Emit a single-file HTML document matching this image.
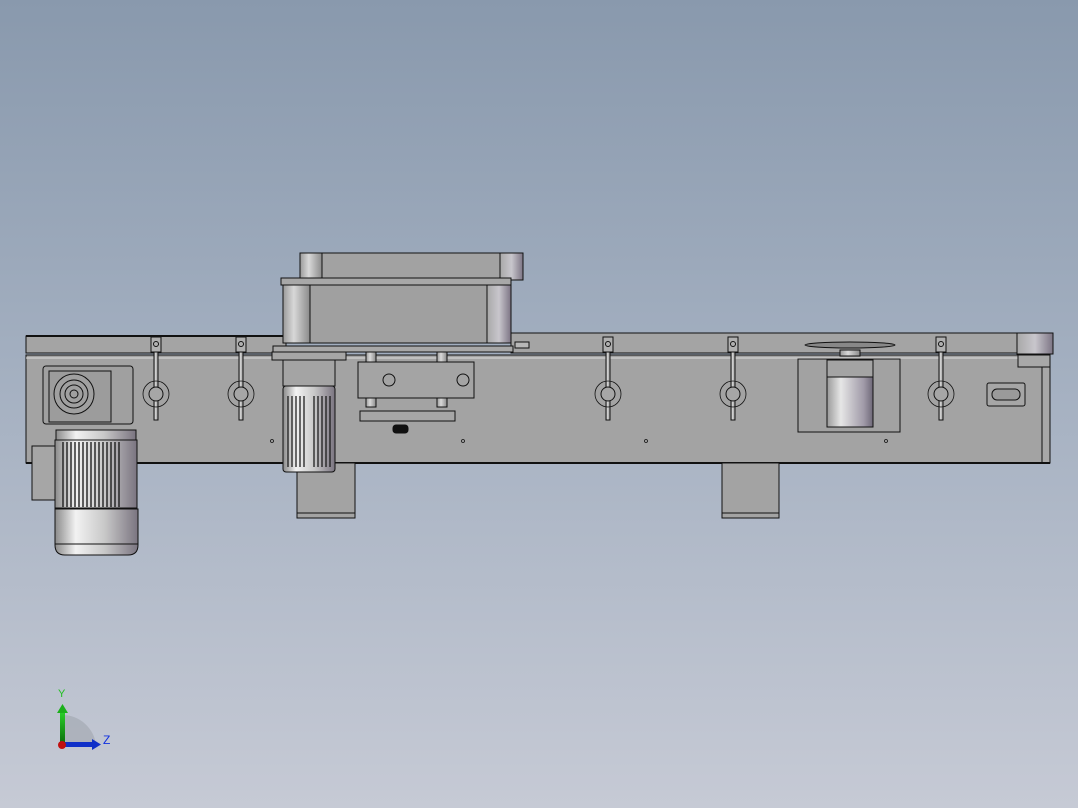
<!DOCTYPE html>
<html><head><meta charset="utf-8"><style>
html,body{margin:0;padding:0;width:1078px;height:808px;overflow:hidden}
body{background:linear-gradient(#8999ad 0%,#a3afc0 45%,#c6cad5 100%)}
svg{position:absolute;left:0;top:0}
</style></head><body>
<svg width="1078" height="808" viewBox="0 0 1078 808" xmlns="http://www.w3.org/2000/svg">
<defs>
<linearGradient id="cyl" x1="0" x2="1"><stop offset="0" stop-color="#8a8a8a"/><stop offset="0.25" stop-color="#f2f2f2"/><stop offset="0.6" stop-color="#c8c8c8"/><stop offset="1" stop-color="#7a7480"/></linearGradient>
<linearGradient id="cyl2" x1="0" x2="1"><stop offset="0" stop-color="#9a9a9a"/><stop offset="0.3" stop-color="#e6e6e6"/><stop offset="0.8" stop-color="#a09aa8"/><stop offset="1" stop-color="#6e6878"/></linearGradient>
<linearGradient id="rol" x1="0" x2="1"><stop offset="0" stop-color="#9a9a9a"/><stop offset="0.4" stop-color="#d8d8d8"/><stop offset="1" stop-color="#8a8a8a"/></linearGradient>
<linearGradient id="rolr" x1="0" x2="1"><stop offset="0" stop-color="#a8a8a8"/><stop offset="0.5" stop-color="#c8c6cc"/><stop offset="1" stop-color="#7c7484"/></linearGradient>
<linearGradient id="tri" x1="0" y1="1" x2="0" y2="0"><stop offset="0" stop-color="#0a6a0a"/><stop offset="1" stop-color="#2ad02a"/></linearGradient>
</defs>
<g stroke="#111" stroke-width="1" fill="#a2a2a2">
<rect x="26" y="336" width="260" height="17" fill="#a4a4a4"/>
<rect x="511" y="333" width="506" height="20" fill="#a4a4a4"/>
<rect x="1017" y="333" width="36" height="21" fill="url(#rolr)"/>
<rect x="515" y="342" width="14" height="6" fill="#b8b8b8"/>
<line x1="26" y1="336" x2="286" y2="336" stroke-width="2"/>
<rect x="26" y="355" width="1024" height="108" fill="#a3a3a3"/>
<line x1="26" y1="358" x2="1050" y2="358" stroke="#ddd"/>
<rect x="1042" y="366" width="8" height="97" fill="#a8a8a8"/>
<rect x="1018" y="355" width="32" height="12" fill="#a8a8a8"/>
<line x1="26" y1="463" x2="1050" y2="463" stroke-width="2"/>
<rect x="297" y="463" width="58" height="55" fill="#a3a3a3"/>
<line x1="297" y1="513" x2="355" y2="513"/>
<rect x="722" y="463" width="57" height="55" fill="#a3a3a3"/>
<line x1="722" y1="513" x2="779" y2="513"/>
<rect x="300" y="253" width="223" height="27" fill="#a2a2a2"/>
<rect x="300" y="253" width="22" height="27" fill="url(#rol)"/>
<rect x="500" y="253" width="23" height="27" fill="url(#rolr)"/>
<rect x="281" y="278" width="230" height="7" fill="#a8a8a8"/>
<rect x="283" y="285" width="228" height="58" fill="#a0a0a0"/>
<rect x="283" y="285" width="27" height="58" fill="url(#rol)"/>
<rect x="487" y="285" width="24" height="58" fill="url(#rolr)"/>
<rect x="273" y="346" width="240" height="6" fill="#a8a8a8"/>
<rect x="272" y="352" width="74" height="8" fill="#a6a6a6"/>
<rect x="283" y="360" width="52" height="26" fill="#a4a4a4"/>
<rect x="283" y="386" width="52" height="86" rx="3" fill="url(#cyl)"/>
<g stroke-width="1.2">
<line x1="288" y1="396" x2="288" y2="467"/><line x1="292" y1="396" x2="292" y2="467"/><line x1="296" y1="396" x2="296" y2="467"/><line x1="300" y1="396" x2="300" y2="467"/><line x1="304" y1="396" x2="304" y2="467"/>
<line x1="314" y1="396" x2="314" y2="467"/><line x1="318" y1="396" x2="318" y2="467"/><line x1="322" y1="396" x2="322" y2="467"/><line x1="326" y1="396" x2="326" y2="467"/><line x1="330" y1="396" x2="330" y2="467"/>
</g>
<rect x="366" y="352" width="10" height="55" fill="url(#rol)"/>
<rect x="437" y="352" width="10" height="55" fill="url(#rol)"/>
<rect x="358" y="362" width="116" height="36" fill="#a4a4a4"/>
<circle cx="389" cy="380" r="6" fill="none"/><circle cx="463" cy="380" r="6" fill="none"/>
<rect x="360" y="411" width="95" height="10" fill="#a6a6a6"/>
<rect x="393" y="425" width="15" height="8" rx="3" fill="#111"/>
<rect x="43" y="366" width="90" height="58" rx="3" fill="#a0a0a0"/>
<rect x="49" y="371" width="62" height="51" fill="#9c9c9c"/>
<circle cx="74" cy="394" r="20" fill="#a0a0a0"/><circle cx="74" cy="394" r="14" fill="none"/><circle cx="74" cy="394" r="9" fill="none"/><circle cx="74" cy="394" r="4" fill="none"/>
<rect x="32" y="446" width="26" height="54" fill="#a6a6a6"/>
<rect x="56" y="430" width="80" height="10" fill="url(#cyl)"/>
<rect x="55" y="440" width="82" height="68" fill="url(#cyl)"/>
<g stroke-width="1.3">
<line x1="63" y1="442" x2="63" y2="507"/><line x1="67" y1="442" x2="67" y2="507"/><line x1="71" y1="442" x2="71" y2="507"/><line x1="75" y1="442" x2="75" y2="507"/><line x1="79" y1="442" x2="79" y2="507"/><line x1="83" y1="442" x2="83" y2="507"/><line x1="87" y1="442" x2="87" y2="507"/><line x1="91" y1="442" x2="91" y2="507"/><line x1="95" y1="442" x2="95" y2="507"/><line x1="99" y1="442" x2="99" y2="507"/><line x1="103" y1="442" x2="103" y2="507"/><line x1="107" y1="442" x2="107" y2="507"/><line x1="111" y1="442" x2="111" y2="507"/><line x1="115" y1="442" x2="115" y2="507"/><line x1="119" y1="442" x2="119" y2="507"/>
</g>
<path d="M55 509 H138 V545 Q138 555 128 555 H65 Q55 555 55 545 Z" fill="url(#cyl)"/>
<line x1="55" y1="544" x2="138" y2="544"/>
<rect x="798" y="359" width="102" height="73" fill="#a2a2a2"/>
<rect x="827" y="360" width="46" height="17" fill="#a4a4a4"/>
<rect x="827" y="377" width="46" height="50" fill="url(#cyl2)"/>
<ellipse cx="850" cy="345" rx="45" ry="3" fill="#888"/>
<rect x="840" y="350" width="20" height="6" fill="url(#rol)"/>
<rect x="987" y="383" width="38" height="23" rx="2" fill="#a6a6a6"/>
<rect x="992" y="389" width="28" height="11" rx="5" fill="#9a9a9a"/>
<g id="u">
<rect x="151" y="337" width="10" height="15" fill="#b0b0b0"/>
<circle cx="156" cy="344" r="2.5" fill="none"/>
<rect x="154" y="352" width="4" height="68" fill="url(#rol)"/>
<circle cx="156" cy="394" r="13" fill="none" stroke-width="0.8"/>
<circle cx="156" cy="394" r="7" fill="#a6a6a6"/>
</g>
<use href="#u" x="85"/><use href="#u" x="452"/><use href="#u" x="577"/><use href="#u" x="785"/>
</g>
<g fill="none" stroke="#111" stroke-width="0.8">
<circle cx="272" cy="441" r="1.5"/><circle cx="463" cy="441" r="1.5"/><circle cx="646" cy="441" r="1.5"/><circle cx="886" cy="441" r="1.5"/>
</g>
<path d="M63 745 V715 A34 34 0 0 1 96 745 Z" fill="#a8adb6" opacity="0.8"/>
<rect x="60" y="712" width="5" height="33" fill="url(#tri)"/>
<path d="M57 713 L62.5 704 L68 713 Z" fill="#1cb01c"/>
<rect x="63" y="742" width="30" height="5" fill="#1030c8"/>
<path d="M92 739 L101 744.5 L92 750 Z" fill="#1030c8"/>
<circle cx="62" cy="745" r="4" fill="#c01010"/>
<text x="58" y="697" font-family="Liberation Sans,sans-serif" font-size="11" fill="#20c020">Y</text>
<text x="103" y="744" font-family="Liberation Sans,sans-serif" font-size="12" fill="#1030e0">Z</text>
</svg>
</body></html>
